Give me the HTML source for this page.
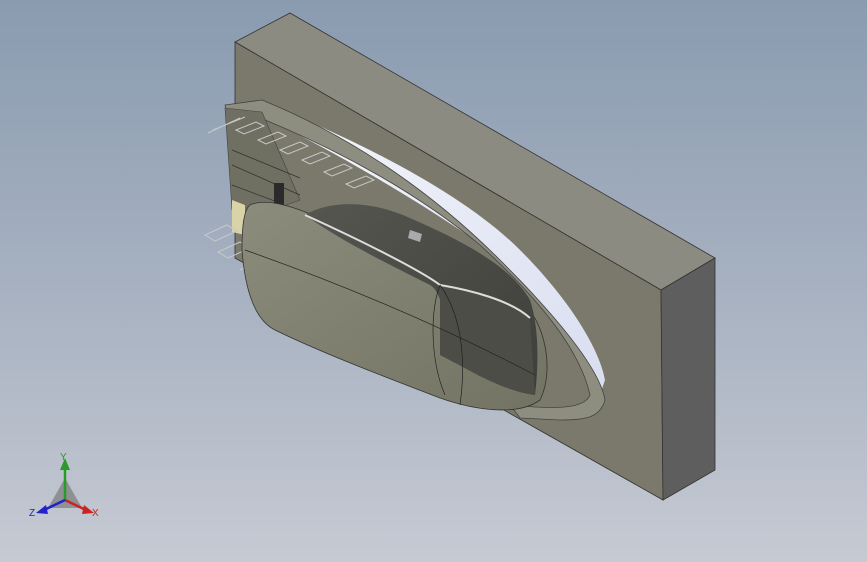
<!DOCTYPE html>
<html><head><style>
html,body{margin:0;padding:0;width:867px;height:562px;overflow:hidden;background:linear-gradient(#8a9bb0 0%,#a9b3c2 55%,#c6cad3 100%);font-family:"Liberation Sans",sans-serif}
svg{position:absolute;left:0;top:0}
</style></head><body>
<svg width="867" height="562" viewBox="0 0 867 562">
<defs>
<linearGradient id="hull" x1="0" y1="0" x2="1" y2="1"><stop offset="0" stop-color="#8c8c7c"/><stop offset="1" stop-color="#737364"/></linearGradient>
<linearGradient id="cab" x1="0" y1="0" x2="1" y2="1"><stop offset="0" stop-color="#555650"/><stop offset="1" stop-color="#3e3f3a"/></linearGradient>
<linearGradient id="wh" x1="0" y1="0" x2="1" y2="1"><stop offset="0" stop-color="#f4f6fb"/><stop offset="1" stop-color="#d9def0"/></linearGradient>
</defs>
<polygon points="235,42 290,13 715,258 661,290" fill="#8b8b82" stroke="#333" stroke-width="0.8"/>
<polygon points="235,42 661,290 663,500 235,258" fill="#7a796b" stroke="#333" stroke-width="0.8"/>
<polygon points="661,290 715,258 715,470 663,500" fill="#5e5e5e" stroke="#333" stroke-width="0.8"/>
<path d="M270,105 C380,150 470,200 520,250 C570,300 600,350 605,380 L600,395 C570,330 520,270 460,230 C400,190 330,150 270,120 Z" fill="url(#wh)"/>
<path d="M225,105 L262,100 C360,140 440,200 500,260 C560,320 600,370 605,400 C600,418 585,420 560,420 L520,418 L510,405 C560,410 585,408 590,395 C580,350 540,300 480,245 C420,195 340,150 260,118 L230,125 Z" fill="#8e8e80" stroke="#444" stroke-width="0.8"/>
<polygon points="225,108 262,112 300,200 245,220 232,210" fill="#6f6f62" stroke="#444" stroke-width="0.6"/>
<polygon points="232,200 245,205 245,235 232,232" fill="#d9d3a8"/>
<path d="M232,150 L300,178 M232,165 L300,195 M232,185 L280,203" stroke="#333" stroke-width="0.8"/>
<rect x="274" y="183" width="10" height="22" fill="#2a2a2a"/>
<g fill="none" stroke="#c8c8c8" stroke-width="1">
<path d="M208,133 L240,118 M213,130 L245,117"/>
<path d="M236,130 l20,-8 l8,4 l-20,8 z M258,140 l20,-8 l8,4 l-20,8 z M280,150 l20,-8 l8,4 l-20,8 z M302,160 l20,-8 l8,4 l-20,8 z M324,172 l20,-8 l8,4 l-20,8 z M346,184 l20,-8 l8,4 l-20,8 z"/>
<path d="M205,235 l22,-10 l10,6 l-22,10 z M218,252 l22,-10 l10,6 l-22,10 z M240,270 l8,-4"/>
</g>
<path d="M250,205 C265,198 290,205 320,218 C400,250 470,275 520,300 C545,320 555,370 540,400 C520,415 480,412 440,398 C380,375 320,352 275,330 C255,320 245,290 242,250 C242,225 244,210 250,205 Z" fill="url(#hull)" stroke="#333" stroke-width="0.8"/>
<path d="M305,215 C330,200 370,200 410,218 C460,240 510,265 530,300 C540,330 538,370 535,395 C500,390 470,370 440,355 C450,320 440,290 430,285 C380,260 340,240 305,215 Z" fill="url(#cab)"/>
<path d="M440,285 C470,290 510,300 530,320 L535,395 C500,390 470,370 440,355 Z" fill="#4c4d46"/>
<path d="M305,215 C360,240 420,270 440,285 C470,290 510,300 530,318" fill="none" stroke="#ddd" stroke-width="2"/>
<path d="M440,285 C430,310 430,360 445,395 M440,285 C465,320 465,370 460,405" fill="none" stroke="#222" stroke-width="0.7"/>
<path d="M245,250 C330,280 430,320 535,375" fill="none" stroke="#222" stroke-width="0.7"/>
<path d="M410,230 l12,4 l-2,8 l-12,-4 z" fill="#aaa"/>
<g>
<polygon points="48,508 65,478 82,508" fill="#7a7a7a" opacity="0.7"/>
<line x1="65" y1="500" x2="65" y2="466" stroke="#2a9a2a" stroke-width="2.5"/>
<polygon points="60,470 65,458 70,470" fill="#2a9a2a"/>
<line x1="65" y1="500" x2="88" y2="511" stroke="#c22" stroke-width="2.5"/>
<polygon points="84,505 94,513 82,514" fill="#c22"/>
<line x1="65" y1="500" x2="42" y2="511" stroke="#22c" stroke-width="2.5"/>
<polygon points="46,505 36,513 48,514" fill="#22c"/>
<text x="60" y="460" font-size="10" fill="#2a9a2a">Y</text>
<text x="92" y="516" font-size="10" fill="#c22">X</text>
<text x="29" y="516" font-size="10" fill="#22c">Z</text>
</g>
</svg>
</body></html>
